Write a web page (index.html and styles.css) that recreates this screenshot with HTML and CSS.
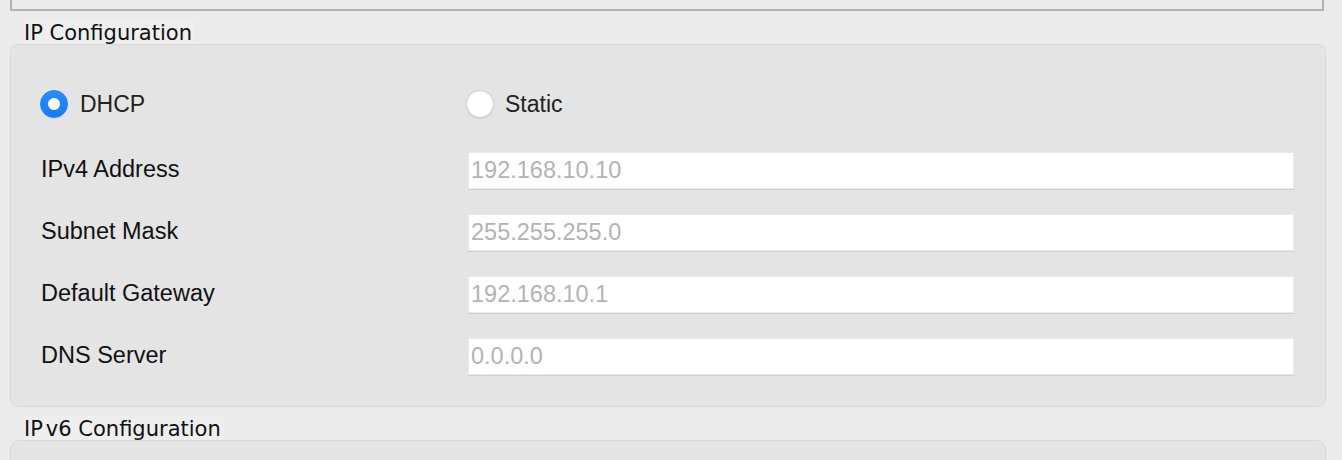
FILE: index.html
```html
<!DOCTYPE html>
<html>
<head>
<meta charset="utf-8">
<link rel="stylesheet" href="styles.css">
</head>
<body>
<div class="page">
  <div class="topbox"></div>

  <div class="group">
    <div class="group-title"><span>IP Configuration</span></div>
    <div class="panel">
      <div class="grid">
        <label class="radio-item">
          <span class="radio checked"></span>
          <span class="radio-text">DHCP</span>
        </label>
        <label class="radio-item static">
          <span class="radio"></span>
          <span class="radio-text">Static</span>
        </label>

        <div class="field-label">IPv4 Address</div>
        <div class="field">192.168.10.10</div>

        <div class="field-label">Subnet Mask</div>
        <div class="field">255.255.255.0</div>

        <div class="field-label">Default Gateway</div>
        <div class="field">192.168.10.1</div>

        <div class="field-label">DNS Server</div>
        <div class="field">0.0.0.0</div>
      </div>
    </div>
  </div>

  <div class="group">
    <div class="group-title"><span>IP<span class="kern"></span>v6 Configuration</span></div>
    <div class="panel panel-tail"></div>
  </div>
</div>
</body>
</html>
```

FILE: styles.css
```css
html, body {
  margin: 0;
  padding: 0;
  background: #ebebeb;
}

body {
  width: 1342px;
  height: 460px;
  overflow: hidden;
  font-family: "Liberation Sans", Arial, sans-serif;
}

.page {
  padding: 0 16px 0 10px;
}

.topbox {
  height: 9px;
  width: 1310px;
  border: 2px solid #b3b3b3;
  border-top: none;
  background: #ebebeb;
}

.group {
  margin-top: 9px;
}

.group-title {
  height: 24px;
  padding-left: 14px;
}

.group-title > span {
  display: inline-block;
  font-family: "DejaVu Sans", sans-serif;
  font-size: 21px;
  line-height: 27px;
  height: 24px;
  overflow: hidden;
  vertical-align: top;
  color: #111;
  background: #eeeeee;
  padding-right: 2px;
}

.kern {
  display: inline-block;
  width: 3px;
}

.panel {
  background: #e4e4e4;
  border: 1px solid #d8d8d8;
  border-radius: 9px;
  width: 1316px;
  box-sizing: border-box;
  padding: 40px 31px 31px 29px;
}

.panel-tail {
  height: 60px;
}

.grid {
  display: grid;
  grid-template-columns: 426px 1fr;
  grid-template-rows: 42px repeat(4, 37px);
  row-gap: 25px;
}

.radio-item {
  display: flex;
  align-items: center;
  gap: 12px;
  height: 37px;
  align-self: start;
}

.radio-item.static {
  gap: 11px;
}

.radio {
  width: 28px;
  height: 28px;
  border-radius: 50%;
  box-sizing: border-box;
  background: #ffffff;
  border: 1px solid #cfcfcf;
  box-shadow: 0 1px 1px rgba(0, 0, 0, 0.08);
  position: relative;
  flex: none;
}

.radio.checked {
  background: linear-gradient(#2c8dfc, #137bf7);
  border: 1px solid #1a7df5;
}

.radio.checked::after {
  content: "";
  position: absolute;
  left: 7px;
  top: 7px;
  width: 12px;
  height: 12px;
  border-radius: 50%;
  background: #ffffff;
}

.radio-text {
  font-size: 23px;
  color: #222;
  line-height: 28px;
}

.field-label {
  font-size: 23.5px;
  color: #111;
  line-height: 34px;
  padding-left: 1px;
}

.field {
  margin-left: 2px;
  background: #ffffff;
  border: 1px solid #e9e9e9;
  box-shadow: 0 1px 0 #cfcfcf;
  height: 37px;
  box-sizing: border-box;
  font-size: 23.5px;
  line-height: 35px;
  color: #b3b3b3;
  padding-left: 2px;
}
```
